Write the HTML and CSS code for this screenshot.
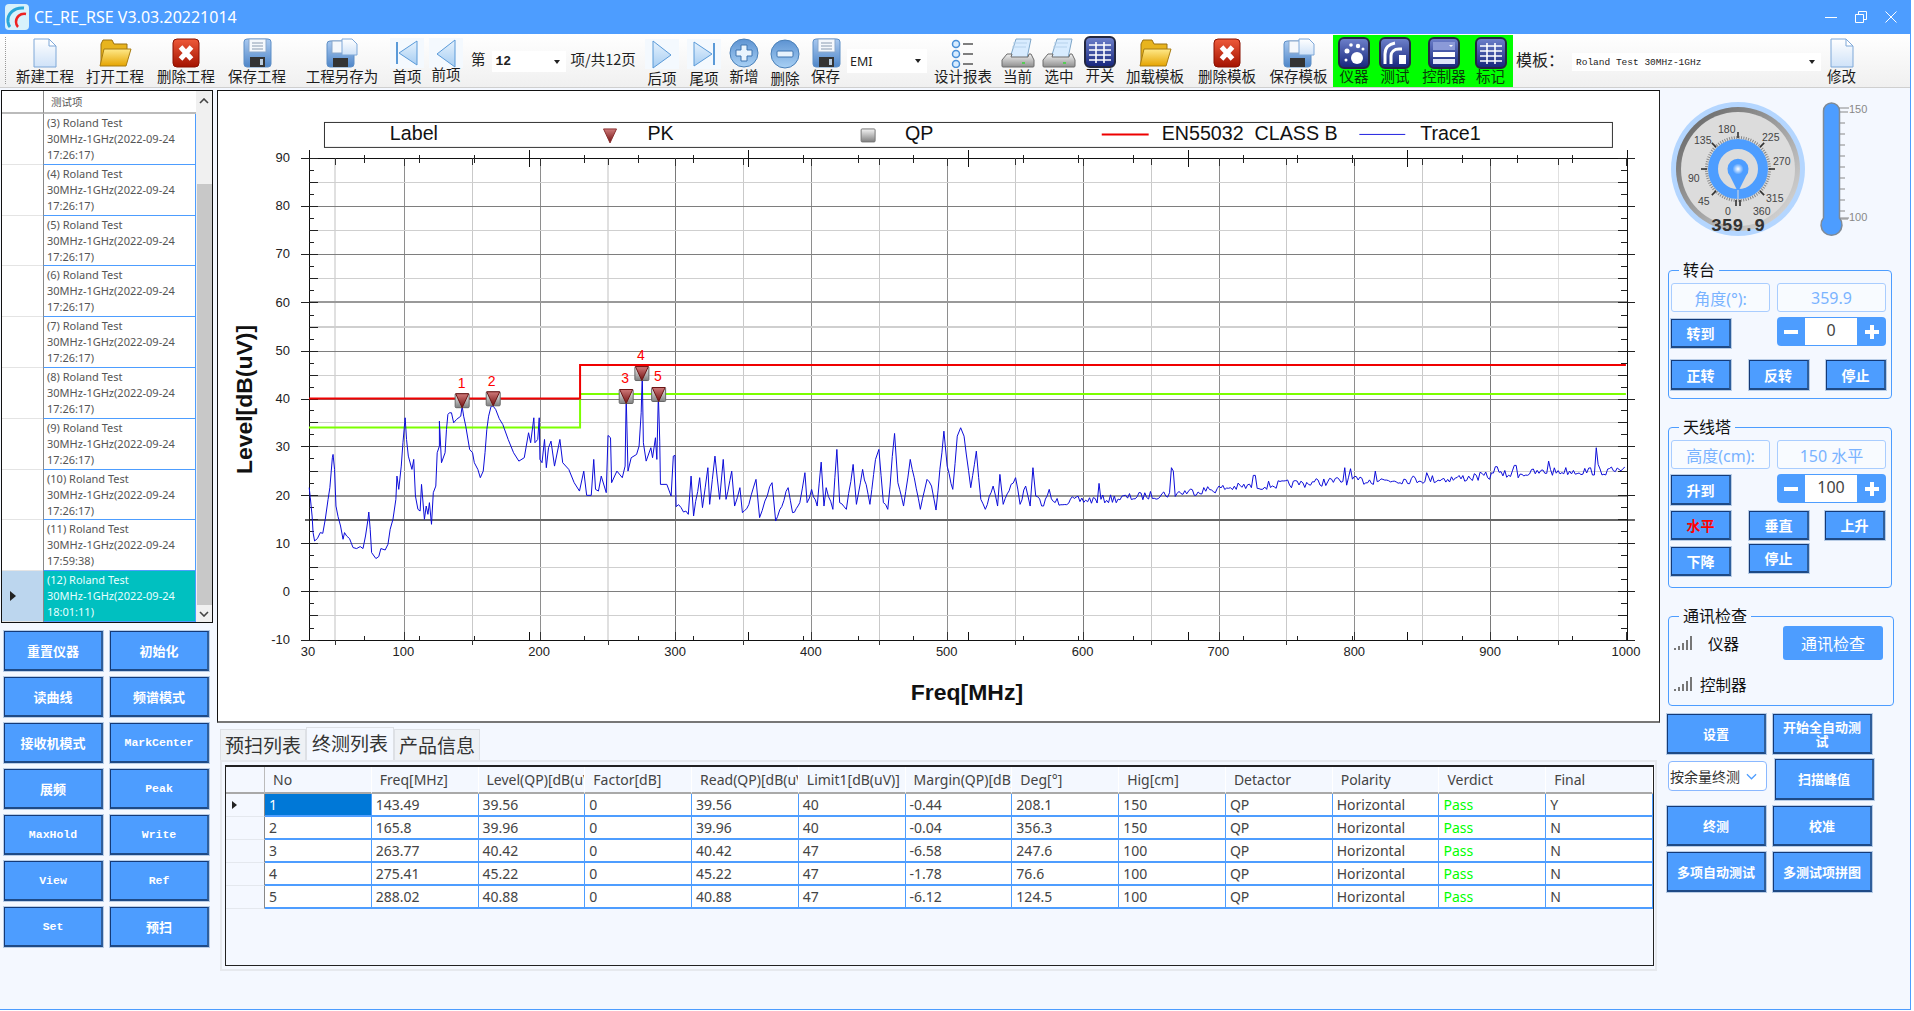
FILE: index.html
```html
<!DOCTYPE html>
<html lang="zh">
<head>
<meta charset="utf-8">
<title>CE_RE_RSE V3.03.20221014</title>
<link rel="stylesheet" href="styles.css">
</head>
<body>
<svg class="defs" width="0" height="0" aria-hidden="true">
  <defs>
    <linearGradient id="gDoc" x1="0" y1="0" x2="0" y2="1"><stop offset="0" stop-color="#fff"/><stop offset="1" stop-color="#cfe2f8"/></linearGradient>
    <linearGradient id="gFolder" x1="0" y1="0" x2="0" y2="1"><stop offset="0" stop-color="#ffe98a"/><stop offset="1" stop-color="#e5a400"/></linearGradient>
    <linearGradient id="gRed" x1="0" y1="0" x2="0" y2="1"><stop offset="0" stop-color="#ee5a3a"/><stop offset="1" stop-color="#a31200"/></linearGradient>
    <linearGradient id="gFloppy" x1="0" y1="0" x2="0" y2="1"><stop offset="0" stop-color="#a9c9f0"/><stop offset="1" stop-color="#4f86c8"/></linearGradient>
    <linearGradient id="gArrow" x1="0" y1="0" x2="0" y2="1"><stop offset="0" stop-color="#e6f2fd"/><stop offset="1" stop-color="#a6cdf2"/></linearGradient>
    <linearGradient id="gRound" x1="0" y1="0" x2="0" y2="1"><stop offset="0" stop-color="#5d93d2"/><stop offset="1" stop-color="#a8d0f4"/></linearGradient>
    <linearGradient id="gNavy" x1="0" y1="0" x2="0" y2="1"><stop offset="0" stop-color="#6f82cc"/><stop offset="1" stop-color="#16257c"/></linearGradient>
    <linearGradient id="gPrint" x1="0" y1="0" x2="0" y2="1"><stop offset="0" stop-color="#f2f2f2"/><stop offset="1" stop-color="#8e8e8e"/></linearGradient>
    <linearGradient id="gRing" x1="0" y1="0" x2="1" y2="1"><stop offset="0" stop-color="#5e5e5e"/><stop offset="1" stop-color="#e2e2e2"/></linearGradient>
    <radialGradient id="gPin"><stop offset="0" stop-color="#fff"/><stop offset="1" stop-color="#4d9dff"/></radialGradient>
    <linearGradient id="gMark" x1="0" y1="0" x2="0" y2="1"><stop offset="0" stop-color="#f4f4f4"/><stop offset="1" stop-color="#808080"/></linearGradient>
    <linearGradient id="gTri" x1="0" y1="0" x2="0" y2="1"><stop offset="0" stop-color="#cf7a7a"/><stop offset="1" stop-color="#701010"/></linearGradient>
    <symbol id="i-doc" viewBox="0 0 34 30"><path d="M6 1h15l7 7v21H6z" fill="url(#gDoc)" stroke="#7fa8d8"/><path d="M21 1v7h7z" fill="#fff" stroke="#7fa8d8"/></symbol>
    <symbol id="i-folder" viewBox="0 0 34 30"><path d="M3 25V6l2-4h9l2 4h13v8z" fill="#e8b41e" stroke="#9a7010"/><path d="M2 28L6 11h27l-5 17z" fill="url(#gFolder)" stroke="#a87c10"/></symbol>
    <symbol id="i-x" viewBox="0 0 34 30"><rect x="4" y="1" width="26" height="28" rx="4" fill="url(#gRed)" stroke="#8a1000"/><path d="M11.500 9l11 12M22.500 9l-11 12" stroke="#fff" stroke-width="5"/></symbol>
    <symbol id="i-floppy" viewBox="0 0 34 30"><rect x="4" y="1" width="27" height="28" rx="3" fill="url(#gFloppy)" stroke="#5f8fc6"/><rect x="9" y="1" width="17" height="13" fill="#f5f8fc" stroke="#8aa8cc"/><path d="M12 5h11M12 8h11M12 11h11" stroke="#8a9bb0"/><rect x="10" y="19" width="15" height="10" fill="#333"/><rect x="20" y="21" width="3" height="6" fill="#bcd"/></symbol>
    <symbol id="i-floppy2" viewBox="0 0 34 30"><rect x="2" y="3" width="27" height="26" rx="3" fill="url(#gFloppy)" stroke="#5f8fc6"/><rect x="7" y="3" width="15" height="12" fill="#f5f8fc" stroke="#8aa8cc"/><rect x="8" y="20" width="15" height="9" fill="#333"/><path d="M17 1h10l5 5v11H17z" fill="url(#gDoc)" stroke="#7fa8d8"/></symbol>
    <symbol id="i-first" viewBox="0 0 34 30"><rect x="6" y="4" width="2" height="22" fill="#5a9ad8"/><path d="M9 15L27 3v24z" fill="url(#gArrow)" stroke="#5a9ad8"/></symbol>
    <symbol id="i-prev" viewBox="0 0 34 30"><path d="M8 16L26 2v27z" fill="url(#gArrow)" stroke="#5a9ad8"/></symbol>
    <symbol id="i-next" viewBox="0 0 34 30"><path d="M26 16L8 2v27z" fill="url(#gArrow)" stroke="#5a9ad8"/></symbol>
    <symbol id="i-last" viewBox="0 0 34 30"><rect x="26" y="4" width="2" height="22" fill="#5a9ad8"/><path d="M25 15L7 3v24z" fill="url(#gArrow)" stroke="#5a9ad8"/></symbol>
    <symbol id="i-plus" viewBox="0 0 34 30"><circle cx="17" cy="15" r="14" fill="url(#gRound)" stroke="#4a80b8"/><path d="M14 7h6v5h5v6h-5v5h-6v-5H9v-6h5z" fill="#e8f3fd" stroke="#3f75b0"/></symbol>
    <symbol id="i-minus" viewBox="0 0 34 30"><circle cx="17" cy="15" r="14" fill="url(#gRound)" stroke="#4a80b8"/><rect x="9" y="12" width="16" height="6" rx="1" fill="#e8f3fd" stroke="#3f75b0"/></symbol>
    <symbol id="i-list" viewBox="0 0 34 30"><g fill="#d8ecff" stroke="#4a90d8" stroke-width="1.500"><circle cx="10" cy="6" r="3.500"/><circle cx="10" cy="16" r="3.500"/><circle cx="10" cy="26" r="3.500"/></g><path d="M17 6h10M17 16h10M17 26h10" stroke="#555" stroke-width="1.500"/></symbol>
    <symbol id="i-print" viewBox="0 0 34 30"><path d="M9 20L15 1h15l-4 19z" fill="#d8ecff" stroke="#7ea6c8"/><path d="M12 5h14M11 9h14" stroke="#b6d2ec"/><path d="M1 22l5-6h5l-1 3h17l1-3h2l3 6v6a1 1 0 0 1-1 1H2a1 1 0 0 1-1-1z" fill="url(#gPrint)" stroke="#6c6c6c"/><rect x="21" y="24" width="3" height="2" fill="#5c5"/></symbol>
    <symbol id="i-table" viewBox="0 0 34 32"><rect x="2" y="1" width="30" height="30" rx="5" fill="url(#gNavy)" stroke="#23283f" stroke-width="2"/><path d="M6 9h22M6 14h22M6 19h22M6 24h22M13 6v21M21 6v21" stroke="#fff" stroke-width="1.600"/></symbol>
    <symbol id="i-instr" viewBox="0 0 34 32"><rect x="2" y="1" width="30" height="30" rx="5" fill="url(#gNavy)" stroke="#23283f" stroke-width="2"/><circle cx="20" cy="21" r="6" fill="#fff"/><circle cx="10" cy="14" r="2.500" fill="#fff"/><circle cx="14" cy="8" r="1.800" fill="#fff"/><circle cx="21" cy="9" r="2.200" fill="#fff"/><circle cx="26" cy="12" r="1.500" fill="#fff"/><circle cx="9" cy="23" r="1.500" fill="#fff"/></symbol>
    <symbol id="i-test" viewBox="0 0 34 32"><rect x="2" y="1" width="30" height="30" rx="5" fill="url(#gNavy)" stroke="#23283f" stroke-width="2"/><path d="M7 27V17C7 11 11 7 17 6M13 27V19c0-4 3-7 8-7h3" fill="none" stroke="#fff" stroke-width="3"/><rect x="21" y="18" width="7" height="9" fill="#fff"/></symbol>
    <symbol id="i-ctrl" viewBox="0 0 34 32"><rect x="2" y="1" width="30" height="30" rx="5" fill="url(#gNavy)" stroke="#23283f" stroke-width="2"/><rect x="6" y="5" width="22" height="8" fill="#8b9ad8"/><path d="M22 8h4l-2 2z" fill="#fff"/><rect x="6" y="15" width="22" height="5" fill="#fff"/><rect x="6" y="22" width="22" height="5" fill="#dfe4fa"/></symbol>
    <symbol id="i-signal" viewBox="0 0 18 16"><g fill="#777"><rect x="0" y="13" width="2" height="2"/><rect x="4" y="11" width="2" height="4"/><rect x="8" y="8" width="2" height="7"/><rect x="12" y="5" width="2" height="10"/><rect x="16" y="1" width="2" height="14"/></g></symbol>
    <symbol id="i-pm" viewBox="0 0 16 16"><rect x="1" y="6" width="14" height="4" fill="#fff"/></symbol>
    <symbol id="i-pp" viewBox="0 0 16 16"><path d="M1 6h5V1h4v5h5v4h-5v5H6v-5H1z" fill="#fff"/></symbol>
  </defs>
</svg>

<div class="window">
  <header class="titlebar">
    <svg class="logo" viewBox="0 0 24 26"><rect width="24" height="26" rx="4" fill="#d8f1fb"/><path d="M19 4C9 3 2 10 3 18c.3 2 1 4 2 5" fill="none" stroke="#2aa6d8" stroke-width="3"/><path d="M21 10c-6-1-10 3-10 8 0 2 1 4 2 5" fill="none" stroke="#e22" stroke-width="2.500"/></svg>
    <span class="app-title">CE_RE_RSE V3.03.20221014</span>
    <div class="winctl">
      <svg viewBox="0 0 14 14"><path d="M1 7.500h12" stroke="#fff"/></svg>
      <svg viewBox="0 0 14 14"><path d="M1.500 4.500h8v8h-8zM4.500 4.500v-3h8v8h-3" fill="none" stroke="#fff"/></svg>
      <svg viewBox="0 0 14 14"><path d="M1.500 1.500l11 11M12.500 1.500l-11 11" stroke="#fff"/></svg>
    </div>
  </header>

  <nav class="toolbar">
    <div class="grip"></div>
    <div class="tool"><svg class="ico"><use href="#i-doc"/></svg><span>新建工程</span></div>
    <div class="tool"><svg class="ico"><use href="#i-folder"/></svg><span>打开工程</span></div>
    <div class="tool"><svg class="ico"><use href="#i-x"/></svg><span>删除工程</span></div>
    <div class="tool"><svg class="ico"><use href="#i-floppy"/></svg><span>保存工程</span></div>
    <div class="tool"><svg class="ico"><use href="#i-floppy2"/></svg><span>工程另存为</span></div>
    <div class="tool"><svg class="ico pale"><use href="#i-first"/></svg><span>首项</span></div>
    <div class="tool up"><svg class="ico pale"><use href="#i-prev"/></svg><span>前项</span></div>
    <div class="pager"><span>第</span><div class="combo combo-page"><b>12</b><i></i></div><span>项/共12页</span></div>
    <div class="tool down"><svg class="ico pale"><use href="#i-next"/></svg><span>后项</span></div>
    <div class="tool down"><svg class="ico pale"><use href="#i-last"/></svg><span>尾项</span></div>
    <div class="tool"><svg class="ico"><use href="#i-plus"/></svg><span>新增</span></div>
    <div class="tool down"><svg class="ico"><use href="#i-minus"/></svg><span>删除</span></div>
    <div class="tool"><svg class="ico"><use href="#i-floppy"/></svg><span>保存</span></div>
    <div class="combo combo-emi"><em>EMI</em><i></i></div>
    <div class="tool"><svg class="ico"><use href="#i-list"/></svg><span>设计报表</span></div>
    <div class="tool"><svg class="ico"><use href="#i-print"/></svg><span>当前</span></div>
    <div class="tool"><svg class="ico"><use href="#i-print"/></svg><span>选中</span></div>
    <div class="tool lift"><svg class="ico"><use href="#i-table"/></svg><span>开关</span></div>
    <div class="tool"><svg class="ico"><use href="#i-folder"/></svg><span>加载模板</span></div>
    <div class="tool"><svg class="ico"><use href="#i-x"/></svg><span>删除模板</span></div>
    <div class="tool"><svg class="ico"><use href="#i-floppy2"/></svg><span>保存模板</span></div>
    <div class="greenbox">
      <div class="tool lift"><svg class="ico"><use href="#i-instr"/></svg><span>仪器</span></div>
      <div class="tool lift"><svg class="ico"><use href="#i-test"/></svg><span>测试</span></div>
      <div class="tool lift"><svg class="ico"><use href="#i-ctrl"/></svg><span>控制器</span></div>
      <div class="tool lift"><svg class="ico"><use href="#i-table"/></svg><span>标记</span></div>
    </div>
    <div class="tpl-label">模板：</div>
    <div class="combo combo-tpl"><em>Roland Test 30MHz-1GHz</em><i></i></div>
    <div class="tool"><svg class="ico"><use href="#i-doc"/></svg><span>修改</span></div>
  </nav>

  <aside class="left">
    <div class="list">
      <div class="list-body">
        <div class="lrow lhead"><div class="lh"></div><div class="lc">测试项</div></div>
        <div class="lrow"><div class="lh"></div><div class="lc">(3) Roland Test<br>30MHz-1GHz(2022-09-24<br>17:26:17)</div></div>
        <div class="lrow"><div class="lh"></div><div class="lc">(4) Roland Test<br>30MHz-1GHz(2022-09-24<br>17:26:17)</div></div>
        <div class="lrow"><div class="lh"></div><div class="lc">(5) Roland Test<br>30MHz-1GHz(2022-09-24<br>17:26:17)</div></div>
        <div class="lrow"><div class="lh"></div><div class="lc">(6) Roland Test<br>30MHz-1GHz(2022-09-24<br>17:26:17)</div></div>
        <div class="lrow"><div class="lh"></div><div class="lc">(7) Roland Test<br>30MHz-1GHz(2022-09-24<br>17:26:17)</div></div>
        <div class="lrow"><div class="lh"></div><div class="lc">(8) Roland Test<br>30MHz-1GHz(2022-09-24<br>17:26:17)</div></div>
        <div class="lrow"><div class="lh"></div><div class="lc">(9) Roland Test<br>30MHz-1GHz(2022-09-24<br>17:26:17)</div></div>
        <div class="lrow"><div class="lh"></div><div class="lc">(10) Roland Test<br>30MHz-1GHz(2022-09-24<br>17:26:17)</div></div>
        <div class="lrow"><div class="lh"></div><div class="lc">(11) Roland Test<br>30MHz-1GHz(2022-09-24<br>17:59:38)</div></div>
        <div class="lrow sel"><div class="lh"><s></s></div><div class="lc">(12) Roland Test<br>30MHz-1GHz(2022-09-24<br>18:01:11)</div></div>
      </div>
      <div class="scroll">
        <svg viewBox="0 0 10 6"><path d="M1 5l4-4 4 4" fill="none" stroke="#444" stroke-width="1.600"/></svg>
        <div class="thumb"></div>
        <svg viewBox="0 0 10 6"><path d="M1 1l4 4 4-4" fill="none" stroke="#444" stroke-width="1.600"/></svg>
      </div>
    </div>
    <div class="btn-grid">
      <button class="btn">重置仪器</button><button class="btn">初始化</button>
      <button class="btn">读曲线</button><button class="btn">频谱模式</button>
      <button class="btn">接收机模式</button><button class="btn lat">MarkCenter</button>
      <button class="btn">展频</button><button class="btn lat">Peak</button>
      <button class="btn lat">MaxHold</button><button class="btn lat">Write</button>
      <button class="btn lat">View</button><button class="btn lat">Ref</button>
      <button class="btn lat">Set</button><button class="btn">预扫</button>
    </div>
  </aside>

  <main class="center">
    <div class="chart-box">
      <svg class="chart" viewBox="218 91 1441 631">
        <g id="grid" shape-rendering="crispEdges"></g>
        <path d="M308 428H579.500V394.500H1627" fill="none" stroke="#7cff00" stroke-width="2"/>
        <path id="trace" fill="none" stroke="#0c0cd8" stroke-width="1"/>
        <path d="M308 399H579.500V365.500H1627" fill="none" stroke="#f00000" stroke-width="2"/>
        <g id="marks"></g>
        <g id="labels" class="tick-text"></g>
        <rect x="323.500" y="122.500" width="1290" height="25" fill="#fff" stroke="#333"/>
        <g class="legend-text">
          <text x="389" y="140">Label</text>
          <path d="M603 129h13l-6.500 14z" fill="url(#gTri)" stroke="#8a3030"/>
          <text x="647" y="140">PK</text>
          <rect x="861" y="129" width="14" height="13" rx="1" fill="url(#gMark)" stroke="#777"/>
          <text x="905" y="140">QP</text>
          <path d="M1102 134.500h47" stroke="#e00" stroke-width="2"/>
          <text x="1162" y="140" xml:space="preserve">EN55032  CLASS B</text>
          <path d="M1360 134.500h46" stroke="#2020e0" stroke-width="1"/>
          <text x="1421" y="140">Trace1</text>
        </g>
        <text class="axis-title" transform="translate(251 400) rotate(-90)" text-anchor="middle">Level[dB(uV)]</text>
        <text class="axis-title" x="967" y="701" text-anchor="middle">Freq[MHz]</text>
      </svg>
    </div>
    <div class="tabs">
      <div class="tab">预扫列表</div>
      <div class="tab active">终测列表</div>
      <div class="tab">产品信息</div>
    </div>
    <div class="tab-panel">
      <div class="gridbox">
        <table class="dg">
          <colgroup><col class="col-rh"></colgroup>
          <thead>
            <tr><th class="rh"></th><th>No</th><th>Freq[MHz]</th><th>Level(QP)[dB(uV)]</th><th>Factor[dB]</th><th>Read(QP)[dB(uV)]</th><th>Limit1[dB(uV)]</th><th>Margin(QP)[dB]</th><th>Deg[°]</th><th>Hig[cm]</th><th>Detactor</th><th>Polarity</th><th>Verdict</th><th>Final</th></tr>
          </thead>
          <tbody>
            <tr><td class="rh"><s></s></td><td class="cur">1</td><td>143.49</td><td>39.56</td><td>0</td><td>39.56</td><td>40</td><td>-0.44</td><td>208.1</td><td>150</td><td>QP</td><td>Horizontal</td><td class="pass">Pass</td><td>Y</td></tr>
            <tr><td class="rh"></td><td>2</td><td>165.8</td><td>39.96</td><td>0</td><td>39.96</td><td>40</td><td>-0.04</td><td>356.3</td><td>150</td><td>QP</td><td>Horizontal</td><td class="pass">Pass</td><td>N</td></tr>
            <tr><td class="rh"></td><td>3</td><td>263.77</td><td>40.42</td><td>0</td><td>40.42</td><td>47</td><td>-6.58</td><td>247.6</td><td>100</td><td>QP</td><td>Horizontal</td><td class="pass">Pass</td><td>N</td></tr>
            <tr><td class="rh"></td><td>4</td><td>275.41</td><td>45.22</td><td>0</td><td>45.22</td><td>47</td><td>-1.78</td><td>76.6</td><td>100</td><td>QP</td><td>Horizontal</td><td class="pass">Pass</td><td>N</td></tr>
            <tr><td class="rh"></td><td>5</td><td>288.02</td><td>40.88</td><td>0</td><td>40.88</td><td>47</td><td>-6.12</td><td>124.5</td><td>100</td><td>QP</td><td>Horizontal</td><td class="pass">Pass</td><td>N</td></tr>
          </tbody>
        </table>
      </div>
    </div>
  </main>

  <aside class="right">
    <div class="dials">
      <svg class="gauge" viewBox="-68 -68 136 136">
        <circle r="67" fill="#b4d6ff"/>
        <circle r="62" fill="url(#gRing)"/>
        <circle r="57" fill="#dcdcdc"/>
        <circle r="31.500" fill="none" stroke="#888" stroke-width="3" stroke-dasharray="1 1.400"/>
        <g stroke="#333" stroke-width="1.600">
          <path d="M0 -31V-37" transform="rotate(0)"/><path d="M0 -31V-37" transform="rotate(45)"/><path d="M0 -31V-37" transform="rotate(90)"/><path d="M0 -31V-37" transform="rotate(135)"/><path d="M2 -31V-37" transform="rotate(180)"/><path d="M-2 -31V-37" transform="rotate(180)"/><path d="M0 -31V-37" transform="rotate(225)"/><path d="M0 -31V-37" transform="rotate(270)"/><path d="M0 -31V-37" transform="rotate(315)"/>
        </g>
        <circle r="25" fill="none" stroke="#4d9dff" stroke-width="10"/>
        <path d="M0 23L-8 7A10.500 10.500 0 1 1 8 7Z" fill="#4d9dff"/>
        <circle r="5.500" cy="0" fill="url(#gPin)"/>
        <path d="M0 21V30" stroke="#dcdcdc" stroke-width="1"/>
        <g class="gauge-num">
          <text x="-12" y="-36">180</text><text x="32" y="-28">225</text><text x="43" y="-4">270</text><text x="36" y="33">315</text><text x="-5" y="46">0</text><text x="23" y="46">360</text><text x="-32" y="36">45</text><text x="-42" y="13">90</text><text x="-36" y="-25">135</text>
        </g>
        <text class="gauge-val" x="0" y="62">359.9</text>
      </svg>
      <svg class="thermo" viewBox="1815 100 55 138">
        <path d="M1839 112h9M1839 123h6M1839 134h6M1839 145h6M1839 156h6M1839 167h6M1839 178h6M1839 189h6M1839 200h6M1839 211h6M1839 219h9M1839 108h10M1839 218h10" stroke="#888"/>
        <path d="M1823.500 111a8 8 0 0 1 16 0v107a10.500 10.500 0 1 1-16 0z" fill="#4d9dff" stroke="#7f8a96" stroke-width="1.500"/>
        <text x="1849" y="113">150</text><text x="1849" y="221">100</text>
      </svg>
    </div>

    <fieldset class="group g1">
      <legend>转台</legend>
      <div class="row first">
        <div class="field f-l">角度(°):</div><div class="field f-r">359.9</div>
      </div>
      <div class="row">
        <button class="btn sm m2">转到</button>
        <div class="stepper"><span><svg><use href="#i-pm"/></svg></span><b>0</b><span><svg><use href="#i-pp"/></svg></span></div>
      </div>
      <div class="row three">
        <button class="btn sm h30">正转</button><button class="btn sm h30">反转</button><button class="btn sm h30">停止</button>
      </div>
    </fieldset>

    <fieldset class="group g2">
      <legend>天线塔</legend>
      <div class="row first">
        <div class="field f-l">高度(cm):</div><div class="field f-r">150 水平</div>
      </div>
      <div class="row">
        <button class="btn sm h30 m1">升到</button>
        <div class="stepper"><span><svg><use href="#i-pm"/></svg></span><b>100</b><span><svg><use href="#i-pp"/></svg></span></div>
      </div>
      <div class="row fixed r3">
        <button class="btn sm red">水平</button><button class="btn sm">垂直</button><button class="btn sm nudge">上升</button>
      </div>
      <div class="row fixed r4">
        <button class="btn sm">下降</button><button class="btn sm raise">停止</button>
      </div>
    </fieldset>

    <fieldset class="group g3">
      <legend>通讯检查</legend>
      <div class="comm">
        <div class="sig s-a"><svg><use href="#i-signal"/></svg><span>仪器</span></div>
        <button class="check">通讯检查</button>
        <div class="sig s-b"><svg><use href="#i-signal"/></svg><span>控制器</span></div>
      </div>
    </fieldset>

    <div class="btn-grid lower">
      <button class="btn">设置</button><button class="btn wrap">开始全自动测试</button>
      <div class="select"><span>按余量终测</span><svg viewBox="0 0 12 7"><path d="M1 1l5 5 5-5" fill="none" stroke="#4d9dff" stroke-width="1.300"/></svg></div><button class="btn shift">扫描峰值</button>
      <button class="btn">终测</button><button class="btn">校准</button>
      <button class="btn">多项自动测试</button><button class="btn">多测试项拼图</button>
    </div>
  </aside>
</div>
<script src="chart.js"></script>
</body>
</html>
```
FILE: styles.css
```css
* { box-sizing: border-box; }
html, body { margin: 0; padding: 0; background: #fff; overflow: hidden; }
body { width: 1914px; height: 1011px; font-family: "Noto Sans", "Noto Sans CJK SC", sans-serif; color: #222; }
.defs { position: absolute; }

.window {
  width: 1911px; height: 1010px;
  display: grid;
  grid-template-columns: 217px 1443px 250px;
  grid-template-rows: 34px 54px 922px;
  background: #f4f8ff;
  border-right: 1px solid #4d9dff;
  border-bottom: 1px solid #4d9dff;
}

/* title bar */
.titlebar { grid-column: 1 / -1; background: #4d9dff; display: flex; align-items: center; padding-left: 5px; color: #fff; }
.logo { width: 24px; height: 26px; }
.app-title { margin-left: 5px; font-size: 16px; }
.winctl { margin-left: auto; margin-right: 12px; display: flex; gap: 16px; }
.winctl svg { width: 14px; height: 14px; }

/* toolbar */
.toolbar {
  grid-column: 1 / -1;
  display: grid;
  grid-template-columns: 12px 66px 74px 68px 74px 96px 34px 44px 174px 40px 44px 36px 46px 35px 87px 66px 43px 40px 42px 68px 76px 67px 181px 53px 259px 33px;
  background: linear-gradient(#ffffff, #f0f0f0);
  border-bottom: 1px solid #cfcfcf;
}
.grip { margin: 3px 0 3px 5px; border-left: 1px dotted #999; }
.tool { display: flex; flex-direction: column; align-items: center; padding-top: 4px; white-space: nowrap; font-size: 14.500px; line-height: 16px; color: #1c1c1c; font-family: "Noto Sans CJK SC", sans-serif; min-width: 0; }
.tool span { margin-top: 0; }
.tool.up span { margin-top: -2px; }
.tool.down { padding-top: 5px; }
.tool.down span { margin-top: 1px; }
.tool.lift { padding-top: 2px; }
.tool.lift span { margin-top: -1px; }
.ico { width: 34px; height: 30px; flex: none; }
.tool.lift .ico { height: 32px; }
.ico.pale { background: #f4f9fe; }
.pager { display: flex; align-items: flex-start; padding-top: 15px; font-size: 14.500px; line-height: 20px; font-family: "Noto Sans CJK SC", sans-serif; padding-left: 3px; white-space: nowrap; }
.combo { background: #fff; position: relative; display: flex; align-items: center; }
.combo i { margin-left: auto; margin-right: 6px; width: 0; height: 0; border: 3px solid transparent; border-top: 4px solid #222; border-bottom: 0; }
.combo em { font-style: normal; }
.combo-page { width: 74px; height: 21px; margin: 2px 5px 0 6px; padding-left: 4px; }
.combo-page b { font: bold 13px "Liberation Mono", monospace; }
.combo-emi { height: 24px; margin: 15px 3px 0 4px; padding-left: 3px; font: 12.500px "Noto Sans", sans-serif; }
.greenbox { margin: 1px 0 0 1px; background: #00ff00; display: grid; grid-template-columns: 42px 40px 58px 35px; }
.greenbox .tool { color: #0a3a0a; }
.tpl-label { padding: 14px 0 0 3px; font-size: 16px; line-height: 22px; font-family: "Noto Sans CJK SC", sans-serif; white-space: nowrap; }
.combo-tpl { height: 18px; margin: 19px 4px 0 6px; padding-left: 4px; font: 9.500px "Liberation Mono", monospace; color: #222; }

/* left */
.left { min-width: 0; }
.list { margin: 2px 0 0 1px; width: 212px; height: 533px; border: 1px solid #111; background: #fff; display: flex; }
.list-body { flex: 1; min-width: 0; display: grid; grid-template-rows: 23px repeat(10, 1fr); }
.lrow { display: grid; grid-template-columns: 41px 1fr; min-height: 0; }
.lh { border-bottom: 1px solid #e4e4e4; display: flex; align-items: center; padding-left: 8px; }
.lc { border-left: 1px solid #888; border-right: 1px solid #4d9dff; border-bottom: 1px solid #4d9dff; padding: 1px 0 0 3px; font-size: 11px; line-height: 16px; color: #555; overflow: hidden; white-space: nowrap; }
.lhead .lh { border-bottom: 2px solid #bbb; }
.lhead .lc { border-bottom: 2px solid #bbb; border-right: 0; padding: 0 0 0 7px; line-height: 21px; font-size: 10.500px; font-family: "Noto Sans CJK SC", sans-serif; color: #555; }
.lrow.sel .lh { background: #bcd6ee; }
.lrow.sel .lc { background: #00c0c0; color: #e6ffff; }
s { display: block; width: 0; height: 0; border: 5px solid transparent; border-left: 6px solid #222; border-right: 0; }
.scroll { width: 16px; background: #f0f0f0; display: flex; flex-direction: column; align-items: center; padding-top: 7px; }
.scroll svg { width: 10px; height: 6px; flex: none; }
.scroll .thumb { width: 15px; margin: 80px 0 0; flex: 1; background: #c8c8c8; }
.scroll svg:last-child { margin: 6px 0 5px; }

.btn-grid { display: grid; grid-template-columns: 99px 99px; column-gap: 7px; row-gap: 6px; grid-auto-rows: 40px; margin: 8px 0 0 4px; }
.btn {
  display: flex; align-items: center; justify-content: center; text-align: center;
  background: #4d9dff; color: #fff; padding: 0 2px;
  border: 1px solid #143a78; border-right: 2px solid #2f5f9c; border-bottom: 2px solid #1e4a86;
  box-shadow: 0 0 0 1px #b9cde6;
  font: bold 13px/14px "Noto Sans CJK SC", sans-serif;
}
.btn.lat { font: bold 11.500px "Liberation Mono", monospace; }

/* center */
.center { min-width: 0; }
.chart-box { margin-top: 2px; width: 1443px; height: 633px; background: #fff; border: 1px solid #111; border-bottom: 2px solid #777; border-right: 1px solid #222; }
.chart { display: block; width: 1441px; height: 630px; }
.tick-text text { font: 13px "Liberation Sans", sans-serif; fill: #222; }
.legend-text text { font: 19.700px "Liberation Sans", sans-serif; fill: #111; white-space: pre; }
.axis-title { font: bold 23px "Liberation Sans", sans-serif; fill: #111; }
.tabs { display: flex; align-items: flex-end; margin: 4px 0 0 3px; height: 33px; font: 19px/30px "Noto Sans CJK SC", sans-serif; color: #333; }
.tab { height: 31px; background: #eef1f5; border: 1px solid #dde0e5; border-bottom: 0; padding: 0 4px; }
.tab.active { height: 33px; background: #f4f8ff; padding: 0 5px; margin-right: 0; }
.tab-panel { margin-left: 3px; width: 1437px; height: 211px; border: 2px solid #e6e9ee; padding: 3px 2px 0 3px; }
.gridbox { width: 1429px; height: 201px; border: 1px solid #222; border-top-width: 2px; background: #f4f8ff; overflow: hidden; }
.dg { table-layout: fixed; width: 1427px; border-collapse: separate; border-spacing: 0; font-size: 14px; color: #444; }
.col-rh { width: 39px; }
.dg th { height: 27px; font-weight: 400; text-align: left; padding: 0 0 0 8px; background: #f4f8ff; border-right: 1px solid #fff; border-bottom: 2px solid #a9a9a9; white-space: nowrap; overflow: hidden; }
.dg td { height: 23px; padding: 0 0 0 4px; background: #fff; border-right: 1px solid #4d9dff; border-bottom: 2px solid #4d9dff; line-height: 20px; white-space: nowrap; overflow: hidden; }
.dg .rh { background: #f4f8ff; border-right: 0; border-bottom: 0; padding: 0 0 0 6px; }
.dg th.rh { border-right: 1px solid #bbb; border-bottom: 2px solid #a9a9a9; }
.dg td.rh { border-right: 1px solid #888; border-bottom: 1px solid #e4e8ee; }
.dg td.rh s { border-width: 4px; border-left-width: 5px; border-right: 0; }
.dg td.cur { background: #0078d7; color: #fff; }
.dg td.pass { color: #00ff00; }

/* right */
.right { min-width: 0; padding-left: 8px; }
.dials { display: flex; padding: 13px 0 0 2px; gap: 9px; height: 149px; }
.gauge { width: 136px; height: 136px; flex: none; }
.gauge-num text { font: 10.500px "Liberation Sans", sans-serif; fill: #444; text-anchor: start; transform: translateX(-8px); }
.gauge-val { font: bold 18px "Liberation Mono", monospace; fill: #333; text-anchor: middle; }
.thermo { width: 55px; height: 138px; flex: none; margin-top: -1px; }
.thermo text { font: 11px "Liberation Sans", sans-serif; fill: #888; }

.group { margin: 0; padding: 0 5px 0 2px; min-width: 0; border: 1px solid #4d9dff; border-radius: 4px; width: 224px; }
.group legend { margin-left: 8px; padding: 0 4px; font: 16px/20px "Noto Sans CJK SC", sans-serif; color: #111; position: relative; top: -1px; }
.g1 { margin-top: 23px; padding-bottom: 8px; }
.g2 { margin-top: 18px; padding-bottom: 11px; }
.g3 { margin-top: 18px; width: 226px; height: 100px; }
.row { display: flex; align-items: flex-start; justify-content: space-between; margin-top: 5px; }
.row.first { margin-top: 3px; }
.row.three { margin-top: 12px; }
.row.fixed { justify-content: flex-start; gap: 18px; }
.r3 { margin-top: 6px; }
.r4 { margin-top: 7px; }
.field { height: 29px; border: 1px solid #a9cdff; border-radius: 3px; display: flex; align-items: center; justify-content: center; font: 16px "Noto Sans", "Noto Sans CJK SC", sans-serif; color: #7ab3ff; background: #f8fbff; }
.f-l { width: 99px; }
.f-r { width: 109px; }
.btn.sm { width: 60px; height: 29px; font-size: 14px; }
.btn.h30 { height: 30px; }
.btn.m2 { margin-top: 2px; }
.btn.m1 { margin-top: 1px; }
.btn.red { color: #f00; }
.btn.nudge { margin-left: -2px; }
.btn.raise { margin-top: -3px; }
.stepper { width: 109px; height: 29px; background: #4d9dff; border-radius: 4px; display: grid; grid-template-columns: 28px 1fr 29px; align-items: center; }
.stepper span { display: flex; justify-content: center; }
.stepper svg { width: 16px; height: 16px; }
.stepper b { height: 27px; background: #fff; text-align: center; font: 16px/25px "Noto Sans", sans-serif; color: #444; }
.comm { display: grid; grid-template-columns: 109px 100px; grid-template-rows: 34px 36px; margin-left: 3px; }
.sig { display: flex; align-items: center; font: 14px "Noto Sans CJK SC", sans-serif; color: #111; }
.sig svg { width: 18px; height: 16px; flex: none; }
.s-a span { margin-left: 16px; font-size: 15.500px; }
.s-b { grid-column: 1; margin-top: 12px; }
.s-b span { margin-left: 8px; font-size: 15.500px; }
.check { background: #4d9dff; border: 0; border-radius: 3px; color: #fff; font: 16px "Noto Sans CJK SC", sans-serif; padding: 0; }

.lower { margin: 8px 0 0 -1px; }
.btn.wrap { line-height: 14px; padding: 0 3px; }
.select { width: 99px; height: 30px; margin: 1px 0 0 1px; background: #fff; border: 1px solid #8ab8ff; border-radius: 4px; display: flex; align-items: center; font: 14px "Noto Sans CJK SC", sans-serif; color: #333; padding-left: 1px; white-space: nowrap; }
.select svg { width: 11px; height: 7px; margin-left: auto; margin-right: 9px; flex: none; }
.btn.shift { margin: -1px 0 0 2px; width: 99px; }
```
FILE: chart.js
```js
(function () {
  var X = function (f) { return 402.5 + (f - 100) * 1.3606; };
  var Y = function (d) { return 592.3 - d * 4.83; };
  var L = 308, R = 1628, T = 158, B = 641;
  var crisp = function (v) { return Math.round(v) + 0.5; };
  var line = function (x1, y1, x2, y2, c, w) {
    return '<path d="M' + x1 + ' ' + y1 + 'L' + x2 + ' ' + y2 + '" stroke="' + c + '" stroke-width="' + (w || 1) + '"/>';
  };
  var g = '', i, v, p;

  // vertical grid
  for (v = 50; v < 1000; v += 50) {
    p = crisp(X(v));
    if (v % 100 === 0) g += line(p, T, p, B, v % 300 === 0 ? '#7a7a7a' : '#8e8e8e');
    else g += line(p, T, p, B, v === 50 || v === 250 || v === 950 ? '#e0e0e0' : '#c9c9c9', v === 50 || v === 250 ? 2 : 1);
  }
  // horizontal grid
  for (v = -5; v < 90; v += 5) {
    p = crisp(Y(v));
    if (v === 15) g += line(304, p, 1636, p, '#666', 2);
    else if (v % 10 === 0) g += line(L, p, R, p, v === 60 || v === 20 ? '#999' : '#7e7e7e', v === 60 || v === 20 ? 2 : 1);
    else g += line(L, p, R, p, '#cfcfcf', v === 55 ? 2 : 1);
  }
  // axes
  g += line(L + .5, 150, L + .5, B, '#111');
  g += line(R + .5, 150, R + .5, B, '#111');
  g += line(300, T + .5, 1636, T + .5, '#111');
  g += line(L, B + .5, R, B + .5, '#111');
  // tick set on 50 MHz grid
  for (v = 50; v <= 1000; v += 50) {
    p = crisp(X(v));
    if (v % 100 === 0) { g += line(p, T, p, T + 8, '#333'); g += line(p, B - 8, p, B, '#333'); }
    else { g += line(p, T, p, T + 7, '#333'); g += line(p, B, p, B + 5, '#333'); }
  }
  // tick set on 55 px pitch
  for (i = 0; i <= 24; i++) {
    p = crisp(L + i * 55);
    if (i % 4 === 0) { g += line(p, 150, p, T + 9, '#111'); g += line(p, B - 8, p, B, '#111'); }
    else { g += line(p, T - 3, p, T + 5, '#222'); g += line(p, B - 4, p, B, '#222'); }
  }
  // left and right ticks
  for (i = 0; i <= 40; i++) {
    v = 90 - i * 2.5;
    p = crisp(Y(v));
    if (v % 10 === 0) { g += line(300, p, 317, p, '#222'); g += line(1619, p, 1636, p, '#222'); }
    else if (v % 5 === 0) { g += line(L, p, 317, p, '#222'); g += line(1619, p, R, p, '#222'); }
    else { g += line(L, p, 313, p, '#222'); g += line(1622, p, R, p, '#222'); }
  }
  document.getElementById('grid').innerHTML = g;

  // axis numbers
  var t = '';
  for (v = -10; v <= 90; v += 10) t += '<text x="289" y="' + (Y(v) + 4.5) + '" text-anchor="end">' + v + '</text>';
  t += '<text x="307" y="657" text-anchor="middle">30</text>';
  for (v = 100; v <= 1000; v += 100) t += '<text x="' + X(v) + '" y="657" text-anchor="middle">' + v + '</text>';
  document.getElementById('labels').innerHTML = t;

  var seed = 7, rnd = function () { seed = (seed * 16807) % 2147483647; return seed / 2147483647; };

  // trace: first part in 2.8x / 3x crop units from the 30-300 MHz range
  var a = [247,205,250,235,255,290,258,340,262,365,270,358,278,340,285,342,292,300,300,240,305,205,312,115,314,105,318,150,322,260,328,292,335,320,342,360,346,340,352,350,360,358,370,385,380,388,390,382,398,388,405,350,412,300,414,278,418,330,422,400,434,418,442,412,448,388,460,392,468,375,474,330,482,300,490,240,493,170,498,210,505,140,510,70,516,-5,520,60,525,110,535,150,540,120,545,230,552,270,558,275,562,195,570,300,575,260,580,285,584,250,590,315,595,220,602,200,606,100,612,80,612,5,618,130,628,100,632,30,636,-15,640,-20,646,-20,652,10,660,0,672,-10,676,-40,680,-10,686,20,697,90,705,100,710,130,720,150,727,175,735,155,740,100,745,30,750,-10,757,-40,763,-40,770,-30,780,-2,790,15,805,60,820,100,835,125,850,115,862,40,868,70,877,-5,880,70,888,60,892,-5,894,120,900,130,907,60,912,145,918,85,925,65,935,140,950,60,958,130,975,150,990,190,1005,215,1017,155,1025,228,1038,228,1045,120,1050,210,1058,215,1066,170,1080,220,1085,48,1092,55,1095,190,1110,155,1125,175,1133,140,1136,-69,1141,155,1150,115,1165,105,1172,80,1178,-20,1181,-138,1184,70,1192,125,1205,85,1210,115,1218,55,1222,120,1226,-75,1230,65,1232,195,1250,195,1262,230,1268,110,1273,108,1276,262,1290,265,1310,285,1318,170,1325,290,1342,175,1350,265,1365,145,1370,255,1385,110,1398,240,1408,120,1416,240,1432,155,1440,260,1455,205,1462,280,1480,255,1500,180,1510,295,1525,245,1545,190,1555,305];
  var pts = [];
  for (i = 0; i < a.length; i += 2) pts.push([220 + a[i] / 2.8, 420 + a[i + 1] / 3]);

  // second part in 1.782x / 3x crop units from the 380-500+ MHz range
  var b = [14,445,22,520,35,490,44,400,48,490,56,450,66,500,73,368,78,500,82,445,94,510,101,330,106,490,118,510,130,375,136,495,147,390,160,495,170,360,176,330,184,490,192,510,204,282,210,430,220,500,232,360,250,510,262,420,270,440,278,512,292,275,298,380,308,450,316,290,322,265,328,290,340,445,350,335,358,480,366,510,380,440,388,500,392,405,398,495,412,435,420,415,428,495,438,440,446,500,451,385,456,470,470,500,480,450];
  for (i = 0; i < b.length; i += 2) pts.push([780 + b[i] / 1.782, 340 + b[i + 1] / 3]);

  // the long straight runs above 300 MHz carry fine ripple
  var rippled = [pts[0]];
  for (i = 1; i < pts.length; i++) {
    var q0 = pts[i - 1], q1 = pts[i], dx = q1[0] - q0[0];
    if (q1[0] > 680 && dx > 3) {
      var n = Math.floor(dx / 1.8);
      for (var j = 1; j < n; j++) {
        var u = j / n;
        rippled.push([q0[0] + dx * u, q0[1] + (q1[1] - q0[1]) * u + (rnd() - .5) * 5]);
      }
    }
    rippled.push(q1);
  }
  pts = rippled;

  // noisy baseline from 580 to 1000 MHz
  var base = [[480,488],[600,478],[700,462],[800,445],[1000,425],[1200,418],[1300,405],[1400,395],[1510,395]];
  var spikes = { 568: 432, 698: 385, 702: 395, 846: 408, 1006: 385, 1018: 388, 1062: 395, 1155: 400, 1278: 382, 1312: 378, 1370: 325, 1373: 365, 1457: 325, 1460: 375 };
  var keys = Object.keys(spikes).map(Number);
  for (var zx = 484; zx <= 1510; zx += 3.4) {
    var k = 0;
    while (k < base.length - 2 && zx > base[k + 1][0]) k++;
    var s = (zx - base[k][0]) / (base[k + 1][0] - base[k][0]);
    var zy = base[k][1] + s * (base[k + 1][1] - base[k][1]) + (rnd() - .5) * 26;
    for (i = 0; i < keys.length; i++) if (Math.abs(keys[i] - zx) < 1.8) zy = spikes[keys[i]];
    pts.push([780 + zx / 1.782, 340 + zy / 3]);
  }
  document.getElementById('trace').setAttribute('d', 'M' + pts.map(function (q) {
    return q[0].toFixed(1) + ' ' + q[1].toFixed(1);
  }).join('L'));

  // peak markers
  var marks = [[461.4, 401.2, 1, 461, 388], [492.5, 399.3, 2, 491, 386], [625.7, 397, 3, 624.6, 383], [641.4, 374, 4, 640.5, 360.5], [658.2, 395, 5, 657.5, 381]];
  var m = '';
  marks.forEach(function (q) {
    m += '<rect x="' + (q[0] - 7) + '" y="' + (q[1] - 7) + '" width="14" height="14" rx="1" fill="url(#gMark)" stroke="#666"/>';
    m += '<path d="M' + (q[0] - 6.5) + ' ' + (q[1] - 7) + 'h13l-6.5 14z" fill="url(#gTri)" stroke="#6a1414"/>';
    m += '<text x="' + q[3] + '" y="' + q[4] + '" text-anchor="middle" font-family="Liberation Sans" font-size="14" fill="#f00">' + q[2] + '</text>';
  });
  document.getElementById('marks').innerHTML = m;
})();
```
